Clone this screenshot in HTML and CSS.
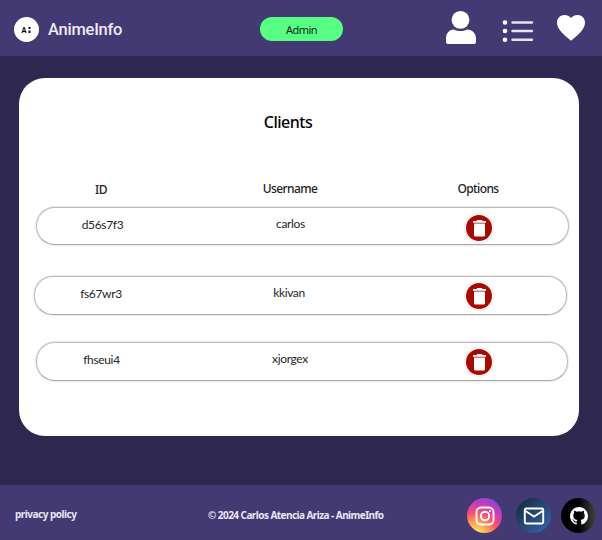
FILE: index.html
```html
<!DOCTYPE html>
<html lang="en">
<head>
<meta charset="utf-8">
<title>AnimeInfo</title>
<link rel="stylesheet" href="styles.css">
</head>
<body>
<svg class="defs" width="0" height="0" aria-hidden="true">
  <symbol id="trash" viewBox="0 0 28 28">
    <circle cx="14" cy="14" r="13" fill="#a80900"/>
    <path d="M8 7h3.300l1-1.100h4.400l1 1.100H21v1.800H8zM9 9.500h11v11.700a1.200 1.200 0 0 1-1.200 1.200h-8.600A1.200 1.200 0 0 1 9 21.200z" fill="#fff"/>
  </symbol>
</svg>
<header class="header">
  <div class="logo"><span>A</span><svg width="3" height="6" viewBox="0 0 3 6"><path d="M0.500 0h2v2h-2zM0.500 3.500h2v2.500h-2z" fill="#111"/></svg></div>
  <div class="brand">AnimeInfo</div>
  <div class="role">Admin</div>
  <nav class="nav">
    <svg class="user" width="32" height="34" viewBox="0 0 32 34" fill="#fff"><circle cx="15.500" cy="8.900" r="8.900"/><path d="M9 18.500c4 2 9 2 13 0 5.500 0 9 4 9 9V31q0 2-2 2H3q-2 0-2-2v-3.500c0-5 3-9 8-9z"/></svg>
    <svg class="list" width="32" height="24" viewBox="0 0 32 24"><g fill="#fff"><circle cx="3" cy="3.500" r="2.300"/><circle cx="3" cy="12" r="2.300"/><circle cx="3" cy="20.800" r="2.300"/></g><path d="M10.500 3.500h19.500M10.500 12h19.500M10.500 20.800h19.500" stroke="#e6e2f0" stroke-width="2.400" stroke-linecap="round"/></svg>
    <svg class="heart" width="30" height="28" viewBox="0 0 30 28"><path d="M15 26.700C11 23.500 1 16 1 8.800 1 4 4.500 1 8.300 1c3 0 5.200 1.200 6.700 3C16.500 2.200 18.700 1 21.700 1 25.500 1 29 4 29 8.800c0 7.200-10 14.700-14 17.900z" fill="#fff"/></svg>
  </nav>
</header>
<main class="main">
  <section class="card">
    <h1 class="title">Clients</h1>
    <div class="grid heads"><span class="head-id">ID</span><span class="head-user">Username</span><span>Options</span></div>
    <div class="grid row first"><span class="id">d56s7f3</span><span class="name">carlos</span><svg class="trash"><use href="#trash"/></svg></div>
    <div class="grid row second"><span class="id">fs67wr3</span><span class="name">kkivan</span><svg class="trash"><use href="#trash"/></svg></div>
    <div class="grid row third"><span class="id">fhseui4</span><span class="name">xjorgex</span><svg class="trash"><use href="#trash"/></svg></div>
  </section>
</main>
<footer class="footer">
  <a class="privacy">privacy policy</a>
  <p class="copy">© 2024 Carlos Atencia Ariza - AnimeInfo</p>
  <div class="social">
    <div class="badge instagram"><svg width="20" height="20" viewBox="0 0 20 20" fill="none" stroke="#fff" stroke-width="1.900"><rect x="1.500" y="1.500" width="17" height="17" rx="4.500"/><circle cx="10" cy="10" r="4.200"/><circle cx="15" cy="5" r=".6" fill="#fff" stroke-width="1"/></svg></div>
    <div class="badge mail"><svg width="22" height="18" viewBox="0 0 22 18" fill="none" stroke="#fff" stroke-width="1.900"><rect x="1.800" y="1.500" width="18.400" height="15" rx="1.500"/><path d="M2.500 4l8.500 5.500L19.500 4"/></svg></div>
    <div class="badge github"><svg width="18" height="18" viewBox="0 0 16 16"><path fill="#fff" d="M8 0C3.580 0 0 3.580 0 8c0 3.540 2.290 6.530 5.470 7.590.4.070.55-.17.55-.38v-1.490c-2.010.37-2.530-.49-2.690-.94-.09-.23-.48-.94-.82-1.130-.28-.15-.68-.52-.01-.53.630-.01 1.080.58 1.230.82.720 1.210 1.870.87 2.330.66.070-.52.280-.87.510-1.070-1.780-.2-3.640-.89-3.640-3.950 0-.87.310-1.590.82-2.150-.08-.2-.36-1.020.08-2.120 0 0 .67-.21 2.200.82a7.600 7.600 0 0 1 4 0c1.530-1.040 2.200-.82 2.200-.82.440 1.100.16 1.920.08 2.120.51.560.82 1.270.82 2.150 0 3.070-1.870 3.750-3.650 3.950.29.250.54.730.54 1.480v2.200c0 .21.150.46.550.38A8 8 0 0 0 16 8c0-4.420-3.580-8-8-8z"/></svg></div>
  </div>
</footer>
</body>
</html>
```
FILE: styles.css
```css
* { box-sizing: border-box; }
body {
  margin: 0;
  height: 540px;
  display: grid;
  grid-template-rows: 56px 429px 55px;
  background: #2e2850;
  color: #000;
  font-family: "Noto Sans", sans-serif;
}
.defs { position: absolute; }
.header {
  display: grid;
  grid-template-columns: 34px 212px 84px 1fr;
  align-items: start;
  padding-left: 14px;
  background: #443a73;
}
.logo {
  width: 25px;
  height: 25px;
  margin-top: 17px;
  display: flex;
  align-items: center;
  justify-content: center;
  gap: 2px;
  border-radius: 50%;
  background: #fff;
  font: 900 7px/8px Lato, sans-serif;
}
.brand {
  margin-top: 20px;
  font: 500 16.500px/20px Roboto, sans-serif;
  letter-spacing: -0.250px;
  color: #ece9f4;
}
.role {
  width: 83px;
  height: 24px;
  margin-top: 17px;
  border-radius: 12px;
  background: #57ff82;
  color: #10251c;
  font: 11px/25px "Noto Sans", sans-serif;
  letter-spacing: -0.500px;
  text-align: center;
}
.nav { display: flex; padding-left: 101px; }
.user { margin-top: 11px; }
.list { margin: 19px 0 0 25px; }
.heart { margin: 14px 0 0 22px; }
.main { padding: 22px 23px 0 19px; }
.card {
  height: 358px;
  padding: 34px 10px 0 15px;
  border-radius: 26px;
  background: #fff;
}
.title {
  margin: 0 0 46px;
  padding-right: 27px;
  font: 500 16px/20px "Noto Sans", sans-serif;
  letter-spacing: -0.500px;
  text-align: center;
}
.grid {
  display: grid;
  grid-template-columns: 132px 246px 130px;
  justify-items: center;
}
.heads {
  height: 29px;
  margin-left: 1px;
  color: #222;
  font: 500 12px/22px "Noto Sans", sans-serif;
  letter-spacing: -0.600px;
}
.head-id { padding-top: 1px; }
.row {
  width: 533px;
  height: 38px;
  border: 1px solid #bcbcbc;
  border-bottom-color: #a8a8a8;
  border-radius: 19px;
  box-shadow: 0 0 1.500px #999;
  color: #262626;
  font: 12px/16px Lato, sans-serif;
  letter-spacing: -0.350px;
}
.first { margin-left: 2px; grid-template-columns: 131px 245px 131px; }
.second { height: 39px; margin-top: 31px; grid-template-columns: 132px 244px 136px; }
.third { height: 39px; margin: 27px 0 0 2px; width: 532px; grid-template-columns: 129px 248px 129px; }
.id { padding-top: 9px; }
.name { padding-top: 8px; }
.trash {
  width: 28px;
  height: 28px;
  margin-top: 5px;
  border-radius: 50%;
  box-shadow: 0 0 2px #8888;
}
.first .trash { margin-top: 6px; }
.footer {
  display: grid;
  grid-template-columns: 193px 259px 1fr;
  padding-left: 15px;
  background: #443a73;
  color: #e9e6f2;
  font: 700 10px/14px "Noto Sans", sans-serif;
  letter-spacing: -0.550px;
}
.privacy { padding-top: 22px; letter-spacing: -0.500px; }
.copy { margin: 23px 0 0; }
.social { display: flex; padding-top: 13px; }
.badge {
  width: 35px;
  height: 35px;
  display: flex;
  align-items: center;
  justify-content: center;
  border-radius: 50%;
}
.instagram { background: radial-gradient(circle at 25% 105%, #ffdc65 10%, #ff9a50 30%, #f94b78 50%, #c13ac0 72%, #5358e8 100%); }
.mail { margin-left: 14px; background: linear-gradient(135deg, #18304b 15%, #3a68b4); }
.github { margin-left: 10px; background: linear-gradient(90deg, #000 50%, #444); }
```
